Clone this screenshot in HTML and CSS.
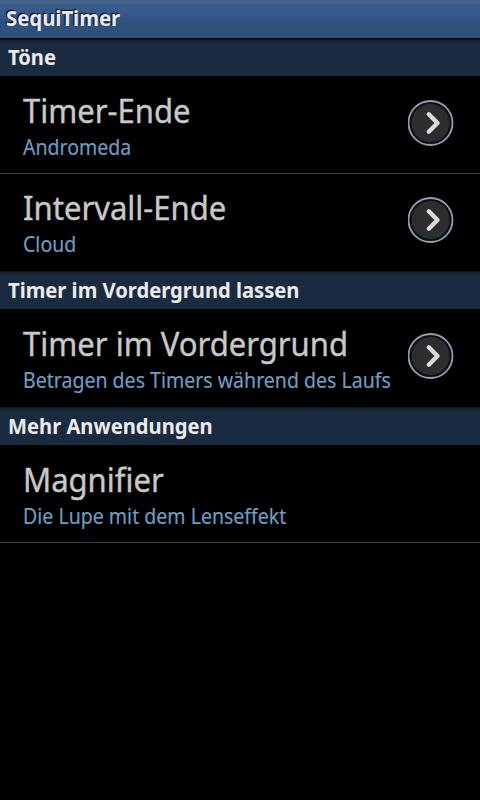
FILE: index.html
```html
<!DOCTYPE html>
<html lang="de">
<head>
    <meta charset="UTF-8">
    <meta name="viewport" content="width=device-width, initial-scale=1.0">
    <title>SequiTimer</title>
    <link rel="stylesheet" href="styles.css">
</head>
<body>
    <header class="title-bar"><h1>SequiTimer</h1></header>

    <main class="settings">
        <h2 class="category first"><span>Töne</span></h2>
        <div class="row">
            <div class="row-text">
                <div class="row-title">Timer-Ende</div>
                <div class="row-summary">Andromeda</div>
            </div>
            <svg class="arrow" viewBox="0 0 46 46">
                <circle class="ring" cx="22.5" cy="23" r="22"/>
                <circle class="disc" cx="22.5" cy="23" r="19"/>
                <path class="chevron" d="M20.8 14.3l8.7 8.7-8.7 8.7"/>
            </svg>
        </div>
        <div class="row last">
            <div class="row-text">
                <div class="row-title">Intervall-Ende</div>
                <div class="row-summary">Cloud</div>
            </div>
            <svg class="arrow" viewBox="0 0 46 46">
                <circle class="ring" cx="22.5" cy="23" r="22"/>
                <circle class="disc" cx="22.5" cy="23" r="19"/>
                <path class="chevron" d="M20.8 14.3l8.7 8.7-8.7 8.7"/>
            </svg>
        </div>

        <h2 class="category"><span>Timer im Vordergrund lassen</span></h2>
        <div class="row last">
            <div class="row-text">
                <div class="row-title">Timer im Vordergrund</div>
                <div class="row-summary">Betragen des Timers während des Laufs</div>
            </div>
            <svg class="arrow" viewBox="0 0 46 46">
                <circle class="ring" cx="22.5" cy="23" r="22"/>
                <circle class="disc" cx="22.5" cy="23" r="19"/>
                <path class="chevron" d="M20.8 14.3l8.7 8.7-8.7 8.7"/>
            </svg>
        </div>

        <h2 class="category"><span>Mehr Anwendungen</span></h2>
        <div class="row">
            <div class="row-text">
                <div class="row-title">Magnifier</div>
                <div class="row-summary">Die Lupe mit dem Lenseffekt</div>
            </div>
        </div>
    </main>
</body>
</html>
```
FILE: styles.css
```css
* {
    box-sizing: border-box;
}

body {
    margin: 0;
    min-height: 800px;
    background: #000;
    font-family: "Noto Sans", "Open Sans", sans-serif;
    overflow-x: hidden;
}

.title-bar {
    height: 39px;
    padding-left: 6px;
    border-bottom: 1px solid #000;
    background: linear-gradient(#46658c 0, #44638a 4px, #3a5c8b 5px, #35578a 14px, #2e507b 24px, #2e507b 38px);
}

.title-bar h1 {
    margin: 0;
    font-size: 20.5px;
    line-height: 36px;
    font-weight: bold;
    color: #ebebeb;
    text-shadow: -1px -1px 1px #000;
    white-space: nowrap;
    transform: scaleX(0.99);
    transform-origin: left;
}

.category {
    height: 38px;
    margin: 0;
    padding-left: 8px;
    border-top: 1px solid #101722;
    background: linear-gradient(#15202f, #1a2a41 5px);
    font-size: 21px;
    line-height: 36px;
    font-weight: bold;
    color: #ebebeb;
}

.category.first {
    height: 37px;
    line-height: 35px;
}

.category span {
    display: inline-block;
    white-space: nowrap;
    transform: scaleX(0.96);
    transform-origin: left;
}

.row {
    display: flex;
    justify-content: space-between;
    height: 98px;
    padding: 15px 26px 0 23px;
    border-bottom: 1px solid #333f4c;
}

.row.last {
    height: 97px;
    padding-top: 14px;
    border-bottom: none;
}

.category + .row.last {
    height: 98px;
    padding-top: 15px;
}

.row-text {
    width: 380px;
    white-space: nowrap;
}

.row-title {
    font-size: 33px;
    line-height: 40px;
    color: #c8c8c8;
    -webkit-text-stroke: 0.4px #c8c8c8;
    transform: scaleX(0.94);
    transform-origin: left;
}

.row-summary {
    font-size: 22px;
    line-height: 30px;
    color: #6e9dc3;
    -webkit-text-stroke: 0.2px #6e9dc3;
    transform: scaleX(0.888);
    transform-origin: left;
}

.arrow {
    flex: none;
    width: 46px;
    height: 46px;
    margin-top: 9px;
}

.ring {
    fill: #07101d;
    stroke: #999ca4;
    stroke-width: 1.8;
}

.disc {
    fill: #2d2d2d;
}

.chevron {
    fill: none;
    stroke: #dcdcdc;
    stroke-width: 4.4;
    stroke-linecap: round;
    stroke-linejoin: round;
}
```
